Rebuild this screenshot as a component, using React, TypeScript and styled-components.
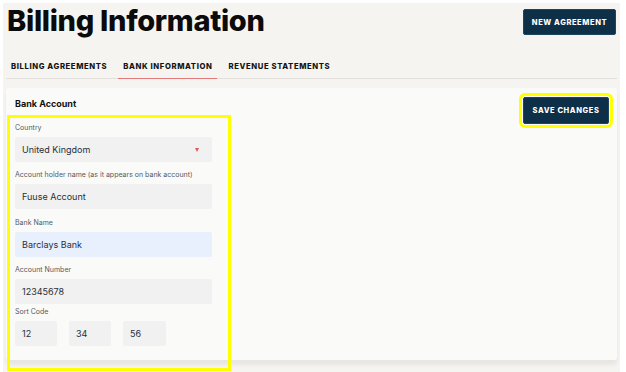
import React from "react";
import styled, { createGlobalStyle } from "styled-components";

const Global = createGlobalStyle`
  html, body { margin: 0; padding: 0; background: #ffffff; }
  body { font-family: "Inter", "Noto Sans", sans-serif; }
  * { box-sizing: border-box; }
`;

const Page = styled.div`
  margin: 3px 0 0 3px;
  width: 617px;
  height: 369px;
  background: #f5f4f1;
  padding: 0 3px;
  display: flex;
  flex-direction: column;
`;

const Header = styled.header`
  display: flex;
  justify-content: space-between;
  align-items: flex-start;
  padding: 0 1px 0 1px;
`;

const Title = styled.h1`
  margin: 0;
  font-family: "Inter", sans-serif;
  font-weight: 800;
  font-size: 29px;
  line-height: 36px;
  color: #0b0b0b;
  letter-spacing: -0.3px;
`;

const NavButton = styled.button<{ $highlight?: boolean }>`
  background: #0d2f48;
  color: #ffffff;
  border: 1px solid #1d4560;
  border-radius: 2px;
  font-family: "Inter", sans-serif;
  font-weight: 800;
  font-size: 7.5px;
  letter-spacing: 0.6px;
  text-transform: uppercase;
  white-space: nowrap;
  height: 26px;
  padding: 0;
  cursor: pointer;
  outline: ${(p) => (p.$highlight ? "3px solid #ffff00" : "none")};
  outline-offset: 1px;
`;

const NewButton = styled(NavButton)`
  margin-top: 6px;
  width: 93px;
`;

const Tabs = styled.nav`
  display: flex;
  margin-top: 18px;
  border-bottom: 1px solid #e2e0dc;
`;

const Tab = styled.div<{ $active?: boolean }>`
  font-family: "Inter", sans-serif;
  font-weight: 800;
  font-size: 7.7px;
  letter-spacing: 0.6px;
  color: #141414;
  text-transform: uppercase;
  white-space: nowrap;
  padding: 5px 5px 7px;
  margin-right: 6px;
  margin-bottom: -1px;
  border-bottom: 1px solid ${(p) => (p.$active ? "#e07a7a" : "transparent")};
`;

const Card = styled.section`
  position: relative;
  margin-top: 9px;
  height: 272px;
  background: #fafaf8;
  border-radius: 3px;
  box-shadow: 0 5px 4px rgba(0, 0, 0, 0.06);
  padding: 8px 8px 0 9px;
`;

const CardHead = styled.div`
  display: flex;
  justify-content: space-between;
  align-items: flex-start;
`;

const CardTitle = styled.h2`
  margin: 0;
  margin-top: 1px;
  font-family: "Inter", sans-serif;
  font-weight: 700;
  font-size: 9px;
  line-height: 14px;
  color: #111;
`;

const SaveButton = styled(NavButton)`
  width: 86px;
  height: 27px;
  margin-top: 1px;
`;

const Form = styled.div`
  display: flex;
  flex-direction: column;
  width: 197px;
  margin-top: -1px;
`;

const Field = styled.div<{ $gap?: number }>`
  display: flex;
  flex-direction: column;
  margin-bottom: ${(p) => p.$gap ?? 8}px;
`;

const Label = styled.label`
  font-family: "Inter", sans-serif;
  font-size: 7px;
  line-height: 10px;
  color: #4f5a66;
  margin-bottom: 4px;
`;

const Box = styled.div<{ $autofill?: boolean; $width?: number }>`
  height: 25px;
  width: ${(p) => (p.$width ? `${p.$width}px` : "100%")};
  background: ${(p) => (p.$autofill ? "#e8f0fe" : "#f0f1f0")};
  border-radius: 2px;
  display: flex;
  align-items: center;
  justify-content: space-between;
  padding: 0 13px 0 7px;
  font-family: "Inter", sans-serif;
  font-size: 9px;
  color: #2a2f36;
`;

const Caret = styled.span`
  width: 0;
  height: 0;
  border-left: 2.5px solid transparent;
  border-right: 2.5px solid transparent;
  border-top: 4px solid #e05a5a;
`;

const SortRow = styled.div`
  display: flex;
  gap: 12px;
`;

const Highlight = styled.div`
  position: absolute;
  left: 1px;
  top: 27px;
  width: 224px;
  height: 256px;
  border: 3px solid #ffff00;
  pointer-events: none;
`;

export default function App() {
  return (
    <>
      <Global />
      <Page>
        <Header>
          <Title>Billing Information</Title>
          <NewButton>New Agreement</NewButton>
        </Header>
        <Tabs>
          <Tab>Billing Agreements</Tab>
          <Tab $active>Bank Information</Tab>
          <Tab>Revenue Statements</Tab>
        </Tabs>
        <Card>
          <CardHead>
            <CardTitle>Bank Account</CardTitle>
            <SaveButton $highlight>Save Changes</SaveButton>
          </CardHead>
          <Form>
            <Field>
              <Label>Country</Label>
              <Box>
                United Kingdom
                <Caret />
              </Box>
            </Field>
            <Field $gap={9}>
              <Label>Account holder name (as it appears on bank account)</Label>
              <Box>Fuuse Account</Box>
            </Field>
            <Field>
              <Label>Bank Name</Label>
              <Box $autofill>Barclays Bank</Box>
            </Field>
            <Field $gap={3}>
              <Label>Account Number</Label>
              <Box>12345678</Box>
            </Field>
            <Field>
              <Label>Sort Code</Label>
              <SortRow>
                <Box $width={42}>12</Box>
                <Box $width={42}>34</Box>
                <Box $width={43}>56</Box>
              </SortRow>
            </Field>
          </Form>
          <Highlight />
        </Card>
      </Page>
    </>
  );
}
